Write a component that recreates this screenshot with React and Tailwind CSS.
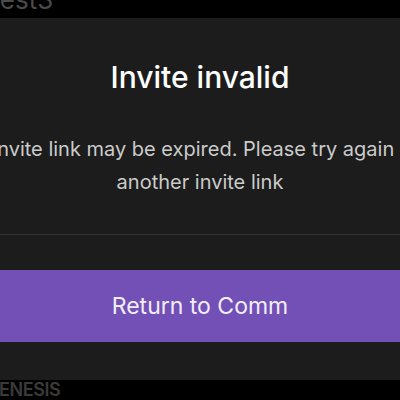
export default function App() {
  return (
    <div className="flex h-[400px] w-[400px] flex-col overflow-hidden bg-black font-['Inter',sans-serif]">
      <div className="h-[18px] shrink-0 overflow-hidden">
        <p className="-ml-[15px] -mt-[13px] text-[26px] leading-[26px] text-[#4a4a4a]">
          Test3
        </p>
      </div>

      <div className="flex h-[362px] shrink-0 flex-col bg-[#1c1c1c] pt-[39px]">
        <h1 className="text-center text-[30px] leading-[40px] font-medium text-white">
          Invite invalid
        </h1>
        <div className="mt-[36px] flex flex-col items-center text-[20px] leading-[33px] text-[#cbcbcb]">
          <p className="whitespace-nowrap pr-[14px]">
            This invite link may be expired. Please try again with
          </p>
          <p className="whitespace-nowrap">another invite link</p>
        </div>
        <div className="mt-[35px] h-px bg-[#343434]" />
        <button className="mt-[35px] h-[72px] w-full bg-[#7350b6] text-[23px] text-[#f2eef9]">
          Return to Comm
        </button>
      </div>

      <div className="h-[20px] shrink-0 overflow-hidden">
        <p className="-ml-[14px] mt-px text-[18px] leading-[18px] font-semibold tracking-tight text-[#3a3a3a]">
          GENESIS
        </p>
      </div>
    </div>
  )
}
